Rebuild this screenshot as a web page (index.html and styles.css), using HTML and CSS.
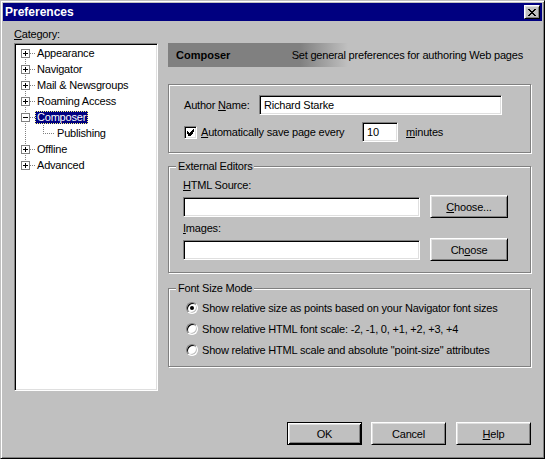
FILE: index.html
```html
<!DOCTYPE html>
<html lang="en">
<head>
    <meta charset="UTF-8">
    <title>Preferences</title>
    <link rel="stylesheet" href="styles.css">
</head>
<body>
    <div class="window">
        <div class="titlebar">
            <span class="title">Preferences</span>
            <button class="close" type="button">
                <svg width="8" height="7" viewBox="0 0 8 7" shape-rendering="crispEdges">
                    <path d="M0 0h2v1H0zM6 0h2v1H6zM1 1h2v1H1zM5 1h2v1H5zM2 2h4v1H2zM3 3h2v1H3zM2 4h4v1H2zM1 5h2v1H1zM5 5h2v1H5zM0 6h2v1H0zM6 6h2v1H6z" fill="#000"/>
                </svg>
            </button>
        </div>

        <div class="dialog">
            <div class="panes">
                <!-- Category tree -->
                <div class="category">
                    <div class="cat-label"><u>C</u>ategory:</div>
                    <div class="tree">
                        <ul class="tree-list">
                            <li class="node"><svg class="twist" width="9" height="9" shape-rendering="crispEdges"><rect x="0.5" y="0.5" width="8" height="8" fill="#fff" stroke="#808080"/><path d="M2 4.5h5M4.5 2v5" stroke="#000"/></svg><span class="link"></span><span class="label">Appearance</span></li>
                            <li class="node"><svg class="twist" width="9" height="9" shape-rendering="crispEdges"><rect x="0.5" y="0.5" width="8" height="8" fill="#fff" stroke="#808080"/><path d="M2 4.5h5M4.5 2v5" stroke="#000"/></svg><span class="link"></span><span class="label">Navigator</span></li>
                            <li class="node"><svg class="twist" width="9" height="9" shape-rendering="crispEdges"><rect x="0.5" y="0.5" width="8" height="8" fill="#fff" stroke="#808080"/><path d="M2 4.5h5M4.5 2v5" stroke="#000"/></svg><span class="link"></span><span class="label">Mail &amp; Newsgroups</span></li>
                            <li class="node"><svg class="twist" width="9" height="9" shape-rendering="crispEdges"><rect x="0.5" y="0.5" width="8" height="8" fill="#fff" stroke="#808080"/><path d="M2 4.5h5M4.5 2v5" stroke="#000"/></svg><span class="link"></span><span class="label">Roaming Access</span></li>
                            <li class="node"><svg class="twist" width="9" height="9" shape-rendering="crispEdges"><rect x="0.5" y="0.5" width="8" height="8" fill="#fff" stroke="#808080"/><path d="M2 4.5h5" stroke="#000"/></svg><span class="link"></span><span class="label selected">Composer</span></li>
                            <li class="node child"><span class="elbow"></span><span class="label">Publishing</span></li>
                            <li class="node"><svg class="twist" width="9" height="9" shape-rendering="crispEdges"><rect x="0.5" y="0.5" width="8" height="8" fill="#fff" stroke="#808080"/><path d="M2 4.5h5M4.5 2v5" stroke="#000"/></svg><span class="link"></span><span class="label">Offline</span></li>
                            <li class="node"><svg class="twist" width="9" height="9" shape-rendering="crispEdges"><rect x="0.5" y="0.5" width="8" height="8" fill="#fff" stroke="#808080"/><path d="M2 4.5h5M4.5 2v5" stroke="#000"/></svg><span class="link"></span><span class="label">Advanced</span></li>
                        </ul>
                    </div>
                </div>

                <!-- Composer page -->
                <div class="page">
                    <div class="page-head">
                        <b>Composer</b>
                        <span>Set general preferences for authoring Web pages</span>
                    </div>

                    <div class="group group-author">
                        <div class="row">
                            <span class="author-label">Author <u>N</u>ame:</span>
                            <input class="field author-field" type="text" value="Richard Starke">
                        </div>
                        <div class="row">
                            <span class="check">
                                <svg width="7" height="7" viewBox="0 0 7 7" shape-rendering="crispEdges">
                                    <path d="M6 0h1v3H6zM5 1h1v4H5zM0 2h1v3H0zM4 2h1v4H4zM1 3h1v4H1zM3 3h1v4H3zM2 4h1v3H2z" fill="#000"/>
                                </svg>
                            </span>
                            <span class="save-label"><u>A</u>utomatically save page every</span>
                            <input class="field minutes-field" type="text" value="10">
                            <span class="minutes"><u>m</u>inutes</span>
                        </div>
                    </div>

                    <div class="group group-editors">
                        <div class="group-title">External Editors</div>
                        <div class="field-label"><u>H</u>TML Source:</div>
                        <div class="row">
                            <input class="field editor-field" type="text" value="">
                            <button class="btn choose" type="button"><u>C</u>hoose...</button>
                        </div>
                        <div class="field-label images-label"><u>I</u>mages:</div>
                        <div class="row">
                            <input class="field editor-field" type="text" value="">
                            <button class="btn choose" type="button">Ch<u>o</u>ose</button>
                        </div>
                    </div>

                    <div class="group group-fonts">
                        <div class="group-title">Font Size Mode</div>
                        <div class="option"><span class="radio on"></span>Show relative size as points based on your Navigator font sizes</div>
                        <div class="option"><span class="radio"></span>Show relative HTML font scale: -2, -1, 0, +1, +2, +3, +4</div>
                        <div class="option"><span class="radio"></span>Show relative HTML scale and absolute "point-size" attributes</div>
                    </div>
                </div>
            </div>

            <div class="buttons">
                <button class="btn default" type="button">OK</button>
                <button class="btn" type="button">Cancel</button>
                <button class="btn help" type="button"><u>H</u>elp</button>
            </div>
        </div>
    </div>
</body>
</html>
```

FILE: styles.css
```css
body {
    margin: 0;
    background-color: #c0c0c0;
    font-family: "Liberation Sans", Arial, sans-serif;
    font-size: 11px;
    letter-spacing: -0.2px;
    color: #000;
}
u {
    text-decoration-thickness: 1px;
    text-underline-offset: 1px;
}
.window {
    width: 545px;
    height: 459px;
    box-sizing: border-box;
    padding: 2px;
    background-color: #c0c0c0;
    border: 1px solid;
    border-color: #c0c0c0 #000 #000 #c0c0c0;
    box-shadow: inset 1px 1px #fff, inset -1px -1px #808080;
    display: flex;
    flex-direction: column;
}
.titlebar {
    height: 18px;
    background-color: #000080;
    color: #fff;
    display: flex;
    align-items: center;
    justify-content: space-between;
    padding-left: 2px;
}
.title {
    font-weight: bold;
    font-size: 12px;
    letter-spacing: 0;
}
.close {
    width: 16px;
    height: 14px;
    margin-right: 2px;
    padding: 0;
    display: flex;
    align-items: center;
    justify-content: center;
    background-color: #c0c0c0;
    border: 1px solid;
    border-color: #fff #000 #000 #fff;
    box-shadow: inset 1px 1px #dfdfdf, inset -1px -1px #808080;
}
.dialog {
    flex: 1;
    display: flex;
    flex-direction: column;
}
.panes {
    display: flex;
    gap: 10px;
    padding: 7px 11px 0 11px;
}

/* tree */
.category {
    width: 144px;
}
.cat-label {
    line-height: 13px;
    height: 13px;
    margin-bottom: 2px;
}
.tree {
    height: 348px;
    box-sizing: border-box;
    background-color: #fff;
    border: 1px solid;
    border-color: #808080 #fff #fff #808080;
    box-shadow: inset 1px 1px #000, inset -1px -1px #dfdfdf;
    padding: 1px;
}
.tree-list {
    list-style: none;
    margin: 0;
    padding: 0;
    background-image: repeating-linear-gradient(to bottom, #808080 0 1px, transparent 1px 2px);
    background-size: 1px 112px;
    background-position: 9px 8px;
    background-repeat: no-repeat;
}
.node {
    height: 16px;
    display: flex;
    align-items: center;
    padding-left: 5px;
}
.twist {
    display: block;
    flex: none;
}
.link {
    width: 5px;
    height: 1px;
    background-image: repeating-linear-gradient(to right, #808080 0 1px, transparent 1px 2px);
}
.label {
    line-height: 13px;
    padding: 0 2px;
    white-space: nowrap;
}
.label.selected {
    background-color: #000080;
    color: #fff;
    outline: 1px dotted #ffff80;
    outline-offset: -1px;
}
.node.child {
    padding-left: 27px;
}
.elbow {
    width: 12px;
    height: 16px;
    background:
        repeating-linear-gradient(to bottom, #808080 0 1px, transparent 1px 2px) 0 0 / 1px 8px no-repeat,
        repeating-linear-gradient(to right, #808080 0 1px, transparent 1px 2px) 0 8px / 12px 1px no-repeat;
}

/* right page */
.page {
    width: 363px;
    padding-top: 15px;
}
.page-head {
    height: 24px;
    display: flex;
    align-items: center;
    justify-content: space-between;
    padding: 0 8px;
    background: linear-gradient(to right, #808080 132px, #c0c0c0 180px);
}
.page-head b {
    letter-spacing: 0;
}
.group {
    border: 1px solid #808080;
    box-shadow: 1px 1px #fff, inset 1px 1px #fff;
}
.group-title {
    width: fit-content;
    line-height: 13px;
    height: 13px;
    padding: 0 2px;
    margin-top: -7px;
    background-color: #c0c0c0;
}
.row {
    display: flex;
    align-items: center;
}
.field {
    box-sizing: border-box;
    height: 20px;
    margin: 0;
    padding: 0 4px;
    background-color: #fff;
    border: 1px solid;
    border-color: #808080 #fff #fff #808080;
    box-shadow: inset 1px 1px #000, inset -1px -1px #dfdfdf;
    font-family: "Liberation Sans", Arial, sans-serif;
    font-size: 11px;
    letter-spacing: -0.2px;
    color: #000;
    outline: none;
}

.group-author {
    margin-top: 17px;
    padding: 10px 15px 10px 15px;
}
.group-author .row + .row {
    margin-top: 7px;
}
.author-label {
    width: 75px;
}
.author-field {
    width: 243px;
}
.check {
    width: 13px;
    height: 13px;
    box-sizing: border-box;
    background-color: #fff;
    border: 1px solid;
    border-color: #808080 #fff #fff #808080;
    box-shadow: inset 1px 1px #000, inset -1px -1px #dfdfdf;
    display: flex;
    align-items: center;
    justify-content: center;
}
.save-label {
    width: 161px;
    margin-left: 4px;
}
.minutes-field {
    width: 36px;
}
.minutes {
    margin-left: 8px;
}

.group-editors {
    margin-top: 13px;
    padding: 0 0 11px 14px;
}
.group-editors .group-title {
    margin-left: -7px;
}
.field-label {
    line-height: 13px;
    margin-top: 6px;
    margin-bottom: 3px;
}
.images-label {
    margin-top: 4px;
}
.editor-field {
    width: 237px;
}
.btn {
    width: 75px;
    height: 23px;
    padding: 0;
    background-color: #c0c0c0;
    border: 1px solid;
    border-color: #fff #000 #000 #fff;
    box-shadow: inset 1px 1px #dfdfdf, inset -1px -1px #808080;
    font-family: "Liberation Sans", Arial, sans-serif;
    font-size: 11px;
    letter-spacing: -0.2px;
    color: #000;
}
.btn.choose {
    width: 78px;
    margin-left: 10px;
}
.btn.default {
    border-color: #000;
    box-shadow: inset 1px 1px #fff, inset -1px -1px #000, inset 2px 2px #dfdfdf, inset -2px -2px #808080;
}

.group-fonts {
    margin-top: 15px;
    padding: 0 0 6px 17px;
}
.group-fonts .group-title {
    margin-left: -10px;
}
.group-fonts .group-title + .option {
    margin-top: 2px;
}
.option {
    height: 21px;
    display: flex;
    align-items: center;
    gap: 4px;
    white-space: nowrap;
}
.radio {
    width: 12px;
    height: 12px;
    box-sizing: border-box;
    border-radius: 50%;
    background-color: #fff;
    border: 1px solid;
    border-color: #808080 #fff #fff #808080;
    box-shadow: inset 1px 1px #000, inset -1px -1px #c0c0c0;
    display: flex;
    align-items: center;
    justify-content: center;
}
.radio.on::after {
    content: "";
    width: 4px;
    height: 4px;
    border-radius: 50%;
    background-color: #000;
}

/* dialog buttons */
.buttons {
    margin-top: auto;
    display: flex;
    justify-content: flex-end;
    gap: 9px;
    padding: 0 11px 11px 0;
}
.btn.help {
    margin-left: 1px;
}
```
